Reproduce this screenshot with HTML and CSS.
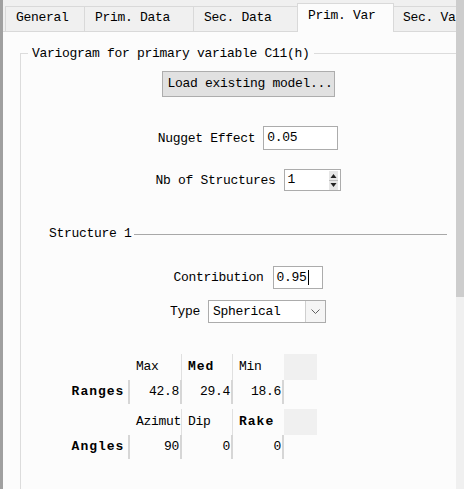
FILE: index.html
```html
<!DOCTYPE html>
<html>
<head>
<meta charset="utf-8">
<link rel="stylesheet" href="styles.css">
</head>
<body>
<div class="window">
  <div class="main">
    <div class="tabbar">
      <div class="tab t1">General</div>
      <div class="tab t2">Prim. Data</div>
      <div class="tab t3">Sec. Data</div>
      <div class="tab t4 active">Prim. Var</div>
      <div class="tab t5">Sec. Var</div>
    </div>
    <div class="page">
      <fieldset class="group">
        <legend>Variogram for primary variable C11(h)</legend>
        <div class="group-body">
          <div class="btn">Load existing model...</div>
          <div class="row nugget">
            <span>Nugget Effect</span>
            <div class="field w-nugget">0.05</div>
          </div>
          <div class="row nb">
            <span>Nb of Structures</span>
            <div class="field spin">
              <span class="spin-val">1</span>
              <div class="spin-btns">
                <svg width="9" height="19" viewBox="0 0 9 19">
                  <rect x="0" y="0" width="9" height="19" fill="#e6e6e6"/>
                  <polygon points="1.5,7 4.5,3 7.5,7" fill="#222"/>
                  <polygon points="1.5,12 4.5,16 7.5,12" fill="#222"/>
                  <line x1="0" y1="9.5" x2="9" y2="9.5" stroke="#bdbdbd" stroke-width="1"/>
                </svg>
              </div>
            </div>
          </div>
          <div class="structure">
            <div class="subhead"><span>Structure 1</span><div class="subline"></div></div>
            <div class="row contrib">
              <span>Contribution</span>
              <div class="field w-contrib">0.95<span class="caret"></span></div>
            </div>
            <div class="row type">
              <span>Type</span>
              <div class="combo">
                <span class="combo-val">Spherical</span>
                <div class="combo-btn">
                  <svg width="9" height="6" viewBox="0 0 9 6"><polyline points="0.5,0.5 4.5,4.5 8.5,0.5" fill="none" stroke="#606060" stroke-width="1"/></svg>
                </div>
              </div>
            </div>
            <div class="tbl first">
              <div class="hc"></div>
              <div class="hc sep">Max</div>
              <div class="hc sep bold">Med</div>
              <div class="hc">Min</div>
              <div class="hc fill"></div>
              <div class="vh bold">Ranges</div>
              <div class="cell">42.8</div>
              <div class="cell">29.4</div>
              <div class="cell">18.6</div>
              <div class="blank"></div>
            </div>
            <div class="tbl second">
              <div class="hc"></div>
              <div class="hc sep">Azimut</div>
              <div class="hc sep">Dip</div>
              <div class="hc bold">Rake</div>
              <div class="hc fill"></div>
              <div class="vh bold">Angles</div>
              <div class="cell">90</div>
              <div class="cell">0</div>
              <div class="cell">0</div>
              <div class="blank"></div>
            </div>
          </div>
        </div>
      </fieldset>
    </div>
  </div>
  <div class="scrollbar"><div class="thumb"></div></div>
</div>
</body>
</html>
```
FILE: styles.css
```css
* { box-sizing: border-box; }
html, body { margin: 0; padding: 0; }
body {
  width: 464px;
  height: 489px;
  overflow: hidden;
  background: #f0f0f0;
  font-family: "Liberation Mono", "DejaVu Sans Mono", monospace;
  font-size: 13px;
  letter-spacing: -0.3px;
  color: #000;
}
.window { display: flex; height: 489px; }
.main {
  width: 456px;
  border-left: 3px solid #a0a0a0;
  display: flex;
  flex-direction: column;
  overflow: hidden;
}
.tabbar {
  display: flex;
  align-items: flex-end;
  height: 32px;
  padding-left: 2px;
  border-bottom: 1px solid #d9d9d9;
  flex-shrink: 0;
}
.tab {
  height: 25px;
  border: 1px solid #d9d9d9;
  border-bottom: none;
  background: #f0f0f0;
  padding: 3px 0 0 10px;
  margin-right: -1px;
  line-height: 15px;
  white-space: nowrap;
  flex-shrink: 0;
}
.t1 { width: 80px; }
.t2 { width: 110px; }
.t3 { width: 105px; }
.t4 { width: 97px; }
.t5 { width: 90px; padding-left: 9px; }
.tab.active {
  height: 29px;
  margin-bottom: -1px;
  background: #fcfcfc;
  position: relative;
  padding-top: 4px;
}
.page {
  flex: 1;
  background: #fcfcfc;
  overflow: hidden;
  padding: 14px 0 0 17px;
}
.group {
  width: 456px;
  margin: 0;
  padding: 0;
  min-width: 0;
  border: 1px solid #dcdcdc;
}
.group legend {
  margin-left: 7px;
  padding: 0 4px;
  line-height: 15px;
}
.group-body {
  display: flex;
  flex-direction: column;
  align-items: center;
  padding-top: 10px;
  padding-bottom: 80px;
}
.btn {
  width: 173px;
  height: 26px;
  border: 1px solid #adadad;
  background: #e1e1e1;
  padding-left: 5px;
  line-height: 24px;
  white-space: nowrap;
}
.row {
  display: flex;
  align-items: center;
  justify-content: center;
  gap: 8px;
  white-space: nowrap;
}
.nugget { margin-top: 29px; }
.nb { margin-top: 19px; }
.field {
  height: 24px;
  border: 1px solid #acacac;
  background: #fff;
  padding-left: 3px;
  line-height: 22px;
  display: flex;
  align-items: center;
}
.w-nugget { width: 75px; }
.spin { width: 57px; height: 22px; padding-right: 1px; }
.spin-val { flex: 1; }
.spin-btns { display: flex; align-items: center; margin-right: 1px; }
.spin-btns svg { display: block; }
.structure {
  align-self: stretch;
  margin: 35px 28px 0 28px;
  display: flex;
  flex-direction: column;
  align-items: center;
}
.subhead {
  align-self: stretch;
  display: flex;
  align-items: center;
  gap: 2px;
  line-height: 15px;
  white-space: nowrap;
}
.subline { flex: 1; height: 1px; background: #a8a8a8; margin-top: 1px; }
.contrib { margin-top: 25px; gap: 9px; }
.w-contrib { width: 50px; height: 23px; }
.caret { display: inline-block; width: 1px; height: 15px; background: #000; margin-left: 1px; }
.type { margin-top: 11px; }
.combo {
  width: 118px;
  height: 23px;
  border: 1px solid #acacac;
  background: #fff;
  display: flex;
  align-items: stretch;
}
.combo-val { flex: 1; padding-left: 4px; line-height: 21px; }
.combo-btn {
  width: 20px;
  border-left: 1px solid #cfcfcf;
  background: #f5f5f5;
  display: flex;
  align-items: center;
  justify-content: center;
}
.combo-btn svg { display: block; }
.tbl {
  align-self: flex-start;
  margin-left: 17px;
  display: grid;
  grid-template-columns: 64px 52px 51px 51px 33px;
  grid-template-rows: 26px 24px;
}
.tbl.first { margin-top: 31px; }
.tbl.second { margin-top: 5px; }
.hc { padding-left: 6px; line-height: 26px; white-space: nowrap; }
.hc.sep { border-right: 1px solid #e0e0e0; }
.hc.fill { background: #f0f0f0; }
.bold { font-weight: bold; letter-spacing: 1px; }
.vh {
  border-right: 2px solid #d6d6d6;
  text-align: center;
  line-height: 24px;
  padding-left: 2px;
}
.cell {
  border-right: 2px solid #d6d6d6;
  text-align: right;
  padding-right: 1px;
  line-height: 24px;
}
.scrollbar { width: 8px; height: 489px; background: #f0f0f0; }
.thumb { height: 297px; background: #cdcdcd; }
```
